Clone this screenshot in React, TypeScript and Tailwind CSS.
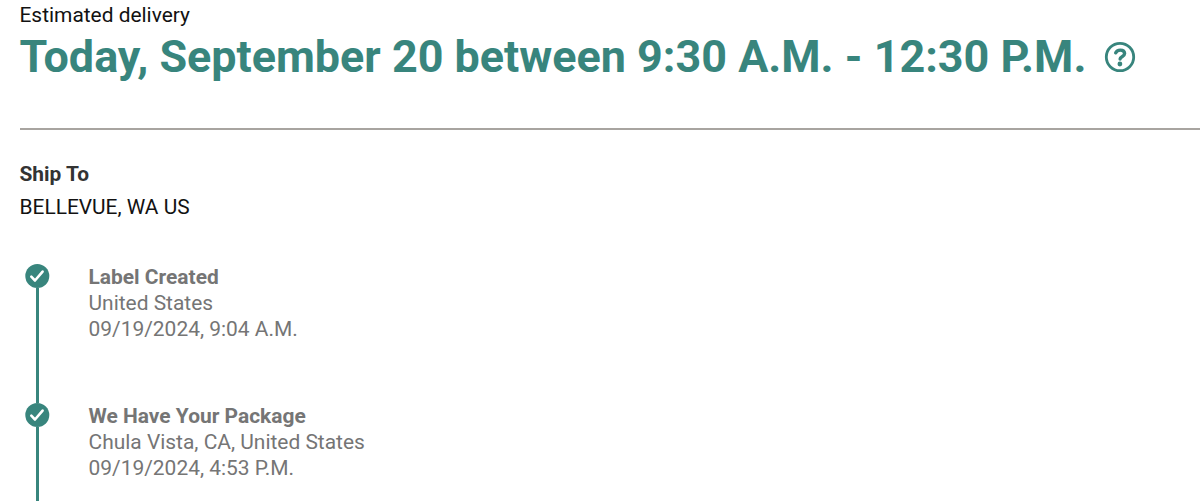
import React from 'react';

interface Milestone {
  title: string;
  location: string;
  date: string;
}

const milestones: Milestone[] = [
  { title: 'Label Created', location: 'United States', date: '09/19/2024, 9:04 A.M.' },
  { title: 'We Have Your Package', location: 'Chula Vista, CA, United States', date: '09/19/2024, 4:53 P.M.' },
];

const CheckIcon: React.FC = () => (
  <svg width="24" height="24" viewBox="0 0 24 24" className="block shrink-0 overflow-visible" aria-hidden="true">
    <circle cx="12.3" cy="12" r="12" fill="#38857d" />
    <path
      d="M6.3 12.6l3.7 3.9 7.6-8.9"
      fill="none"
      stroke="#fff"
      strokeWidth="2.6"
      strokeLinecap="round"
      strokeLinejoin="round"
    />
  </svg>
);

const HelpIcon: React.FC = () => (
  <svg width="30" height="30" viewBox="0 0 30 30" className="block overflow-visible" aria-hidden="true">
    <circle cx="15" cy="15" r="13.7" fill="none" stroke="#38857d" strokeWidth="2.8" />
    <path
      d="M10.7 10.8C11.4 9 12.9 8.1 15.2 8.1c2.7 0 4.4 1.4 4.4 3.5 0 3.2-4.5 3.1-4.5 5.4"
      fill="none"
      stroke="#38857d"
      strokeWidth="3.4"
      strokeLinecap="round"
    />
    <circle cx="14.9" cy="22" r="2.4" fill="#38857d" />
  </svg>
);

export default function App() {
  return (
    <div className="h-[501px] w-full overflow-hidden bg-white pl-[19.5px] font-['Roboto',sans-serif] text-[#121212]">
      <p className="pt-[2px] text-[20.9px] leading-[26px]">Estimated delivery</p>
      <div className="flex h-[57px] items-center">
        <h1 className="whitespace-nowrap text-[44.9px] font-bold leading-[57px] text-[#38857d]">
          Today, September 20 between 9:30 A.M. - 12:30 P.M.
        </h1>
        <button className="ml-[18.5px]" aria-label="Delivery details">
          <HelpIcon />
        </button>
      </div>

      <hr className="mt-[43px] border-t-2 border-[#a8a4a0]" />

      <section className="mt-[31px]">
        <h2 className="text-[20.9px] font-bold leading-[26px] text-[#333]">Ship To</h2>
        <p className="mt-[7px] text-[20.9px] leading-[26px]">BELLEVUE, WA US</p>
      </section>

      <ol className="mt-11">
        {milestones.map((item) => (
          <li key={item.title} className="flex h-[139px]">
            <div className="ml-[5.5px] flex w-6 flex-col items-center">
              <CheckIcon />
              <div className="w-[3px] flex-1 bg-[#38857d]" />
            </div>
            <div className="ml-[39.5px] text-[20.95px] leading-[26.2px] text-[#757575]">
              <h3 className="font-bold">{item.title}</h3>
              <p>{item.location}</p>
              <p>{item.date}</p>
            </div>
          </li>
        ))}
      </ol>
    </div>
  );
}
